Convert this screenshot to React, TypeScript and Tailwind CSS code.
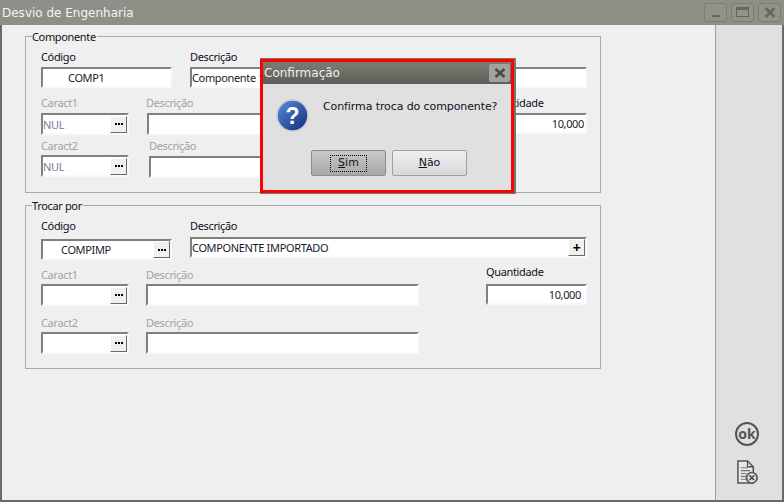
import React from 'react';

const FONT = "font-['Noto_Sans',sans-serif]";

// small "..." or "+" button glued to the right side of an input
const DotButton: React.FC<{ glyph?: string }> = ({ glyph = 'dots' }) => (
  <span className="flex h-[17px] w-[17px] shrink-0 items-center justify-center gap-[1px] border border-t-white border-l-white border-r-[#696969] border-b-[#696969] bg-[#f0f0f0] text-black">
    {glyph === '+' ? (
      <span className="text-[14px] leading-none font-bold">+</span>
    ) : (
      <>
        <span className="h-[2px] w-[2px] bg-black" />
        <span className="h-[2px] w-[2px] bg-black" />
        <span className="h-[2px] w-[2px] bg-black" />
      </>
    )}
  </span>
);

interface BoxProps {
  width: string;
  height?: string;
  text?: string;
  textClass?: string;
  button?: string;
}

const Box: React.FC<BoxProps> = ({ width, height = 'h-[21px]', text, textClass = 'text-[#1a1a2a]', button }) => (
  <div className={`${width} ${height} flex items-center justify-between border-2 border-t-[#808080] border-l-[#808080] border-r-[#f9f9f9] border-b-[#f9f9f9] bg-white text-[11px] leading-none tracking-[-0.35px]`}>
    <span className={`flex-1 whitespace-nowrap ${textClass}`}>{text}</span>
    {button && <DotButton glyph={button} />}
  </div>
);

const Label: React.FC<{ text: string; disabled?: boolean; className?: string }> = ({ text, disabled, className = '' }) => (
  <div className={`pb-[2px] text-[11px] leading-[12px] tracking-[-0.35px] whitespace-nowrap ${disabled ? 'text-[#a3a3a3]' : 'text-[#10101c]'} ${className}`}>{text}</div>
);

const Group: React.FC<{ title: string; className: string; children: React.ReactNode }> = ({ title, className, children }) => (
  <div className={`relative w-[576px] border border-[#a9a9a9] pl-[15px] ${className}`}>
    <span className="absolute -top-[6px] left-[6px] bg-[#efefef] pr-[1px] text-[11px] leading-[12px] tracking-[-0.35px] text-[#10101c]">{title}</span>
    {children}
  </div>
);

const WinButton: React.FC<{ children: React.ReactNode }> = ({ children }) => (
  <span className="flex h-[19px] w-[23px] items-center justify-center rounded-[3px] border border-[#7c7c76] bg-[#92928b]">{children}</span>
);

export default function App() {
  return (
    <div className={`${FONT} flex h-[502px] w-[784px] flex-col overflow-hidden bg-[#6a6a6a] px-[2px] pb-[2px]`}>
      {/* title bar */}
      <div className="-mx-[2px] flex h-[25px] shrink-0 items-center justify-between bg-[#8f8f88] pr-[3px] pl-[2px]">
        <span className="font-['DejaVu_Sans',sans-serif] text-[12px] text-[#f4f4f4]">Desvio de Engenharia</span>
        <div className="flex gap-[4px] pb-[1px]">
          <WinButton><span className="mt-[8px] h-[2px] w-[8px] bg-[#66665f]" /></WinButton>
          <WinButton><span className="h-[10px] w-[13px] border border-t-[3px] border-[#66665f]" /></WinButton>
          <WinButton>
            <svg width="12" height="11" viewBox="0 0 12 11"><path d="M1.5 1l9 9M10.5 1l-9 9" stroke="#66665f" strokeWidth="2.6" /></svg>
          </WinButton>
        </div>
      </div>

      <div className="flex min-h-0 flex-1">
        {/* form area */}
        <div className="relative flex-1 bg-[#efefef] pt-[11px] pl-[23px]">
          <Group title="Componente" className="h-[157px]">
            <div className="flex gap-[18px] pt-[14px]">
              <div>
                <Label text="Código" className="mb-[2px]" />
                <Box width="w-[131px]" text="COMP1" textClass="pl-[25px] text-[#1a1a2a]" />
              </div>
              <div>
                <Label text="Descrição" className="mb-[2px]" />
                <Box width="w-[397px]" text="Componente 1" />
              </div>
            </div>
            <div className="flex pt-[9px]">
              <div className="w-[105px]">
                <Label text="Caract1" disabled className="mb-[2px]" />
                <Box width="w-[88px]" height="h-[22px]" text="NUL" textClass="text-[#7c7c90]" button="dots" />
              </div>
              <div className="w-[340px] pl-[1px]">
                <Label text="Descrição" disabled className="-ml-[1px] mb-[2px]" />
                <Box width="w-[272px]" height="h-[22px]" />
              </div>
              <div>
                <Label text="Quantidade" className="mb-[2px]" />
                <Box width="w-[101px]" text="10,000" textClass="pr-[1px] text-right text-[#1a1a2a]" />
              </div>
            </div>
            <div className="flex pt-[5px]">
              <div className="w-[108px]">
                <Label text="Caract2" disabled className="mb-[1px]" />
                <Box width="w-[88px]" height="h-[22px]" text="NUL" textClass="text-[#7c7c90]" button="dots" />
              </div>
              <div>
                <Label text="Descrição" disabled className="mb-[2px]" />
                <Box width="w-[270px]" height="h-[22px]" />
              </div>
            </div>
          </Group>

          <Group title="Trocar por" className="mt-[12px] h-[164px]">
            <div className="flex gap-[18px] pt-[14px]">
              <div>
                <Label text="Código" className="mb-[5px]" />
                <Box width="w-[131px]" text="COMPIMP" textClass="pl-[18px] text-[#1a1a2a]" button="dots" />
              </div>
              <div>
                <Label text="Descrição" className="mb-[3px]" />
                <Box width="w-[397px]" text="COMPONENTE IMPORTADO" button="+" />
              </div>
            </div>
            <div className="flex pt-[9px]">
              <div className="w-[105px]">
                <Label text="Caract1" disabled className="mb-[1px]" />
                <Box width="w-[88px]" height="h-[22px]" button="dots" />
              </div>
              <div className="w-[340px]">
                <Label text="Descrição" disabled className="mb-[1px]" />
                <Box width="w-[273px]" height="h-[22px]" />
              </div>
              <div className="-mt-[3px]">
                <Label text="Quantidade" className="mb-[4px]" />
                <Box width="w-[101px]" text="10,000" textClass="pr-[4px] text-right text-[#1a1a2a]" />
              </div>
            </div>
            <div className="flex pt-[11px]">
              <div className="w-[105px]">
                <Label text="Caract2" disabled className="mb-[1px]" />
                <Box width="w-[88px]" height="h-[22px]" button="dots" />
              </div>
              <div>
                <Label text="Descrição" disabled className="mb-[1px]" />
                <Box width="w-[273px]" height="h-[22px]" />
              </div>
            </div>
          </Group>
        </div>

        {/* side action bar */}
        <div className="flex w-[67px] shrink-0 flex-col items-center justify-end gap-[14px] border-l border-[#a0a0a0] bg-[#e0e0e0] pr-[4px] pb-[15px]">
          <span className="flex h-[24px] w-[24px] items-center justify-center rounded-full border-2 border-[#555555] pb-[1px] text-[14px] leading-none font-bold text-[#555555]">ok</span>
          <svg width="23" height="25" viewBox="0 0 24 26" fill="none">
            <path d="M2 1h10l6 6v17H2z" fill="#e8e8e8" stroke="#555" strokeWidth="1.6" />
            <path d="M12 1v6h6" stroke="#555" strokeWidth="1.4" />
            <path d="M5 8h7M5 11h10M5 14h6M5 17h6M5 20h6" stroke="#777" strokeWidth="1.2" />
            <circle cx="16.5" cy="18.5" r="5.5" fill="#e8e8e8" stroke="#555" strokeWidth="1.8" />
            <path d="M14 16l5 5M19 16l-5 5" stroke="#555" strokeWidth="1.8" />
          </svg>
        </div>
      </div>

      {/* confirmation dialog */}
      <div className="absolute top-[59px] left-[260px] flex h-[134px] w-[254px] flex-col border-[3px] border-[#ff0000] bg-[#e0e0e0] font-['DejaVu_Sans',sans-serif] shadow-[1px_0_0_1px_#77776f]">
        <div className="flex h-[22px] shrink-0 items-center justify-between bg-gradient-to-b from-[#7d7d75] to-[#5d5d56] pr-[1px] pb-[1px] pl-[1px]">
          <span className="text-[12px] text-[#f0f0f0]">Confirmação</span>
          <span className="flex h-[18px] w-[21px] items-center justify-center rounded-[2px] bg-[#a3a39e]">
            <svg width="12" height="10" viewBox="0 0 12 10"><path d="M1.5 1l9 8M10.5 1l-9 8" stroke="#4b4b46" strokeWidth="2.6" /></svg>
          </span>
        </div>
        <div className="flex items-start pt-[15px] pl-[13px]">
          <svg width="33" height="33" viewBox="0 0 33 33">
            <defs>
              <linearGradient id="q" x1="0" y1="0" x2="1" y2="1">
                <stop offset="0" stopColor="#5c8fe0" />
                <stop offset="1" stopColor="#0f2a78" />
              </linearGradient>
            </defs>
            <circle cx="16.5" cy="16.5" r="15.5" fill="url(#q)" stroke="#c8ccd4" strokeWidth="1.6" />
            <text x="16.5" y="25" textAnchor="middle" fontSize="23" fontWeight="700" fill="#ffffff" fontFamily="Liberation Sans, sans-serif">?</text>
          </svg>
          <span className="mt-[1px] ml-[14px] text-[11px] leading-[14px] tracking-[-0.1px] whitespace-nowrap text-[#10101c]">Confirma troca do componente?</span>
        </div>
        <div className="mt-[18px] flex gap-[6px] pl-[48px]">
          <button className="flex h-[26px] w-[75px] items-center justify-center rounded-[2px] border border-[#8c8c8c] bg-gradient-to-b from-[#c8c8c8] to-[#a8a8a8] text-[11px] text-[#10101c]">
            <span className="flex h-[17px] w-[37px] items-center justify-center border border-dotted border-black"><span className="underline">S</span>im</span>
          </button>
          <button className="flex h-[26px] w-[75px] items-center justify-center rounded-[2px] border border-[#a0a0a0] bg-gradient-to-b from-[#f0f0f0] to-[#d8d8d8] text-[11px] text-[#10101c]">
            <span><span className="underline">N</span>ão</span>
          </button>
        </div>
      </div>
    </div>
  );
}
